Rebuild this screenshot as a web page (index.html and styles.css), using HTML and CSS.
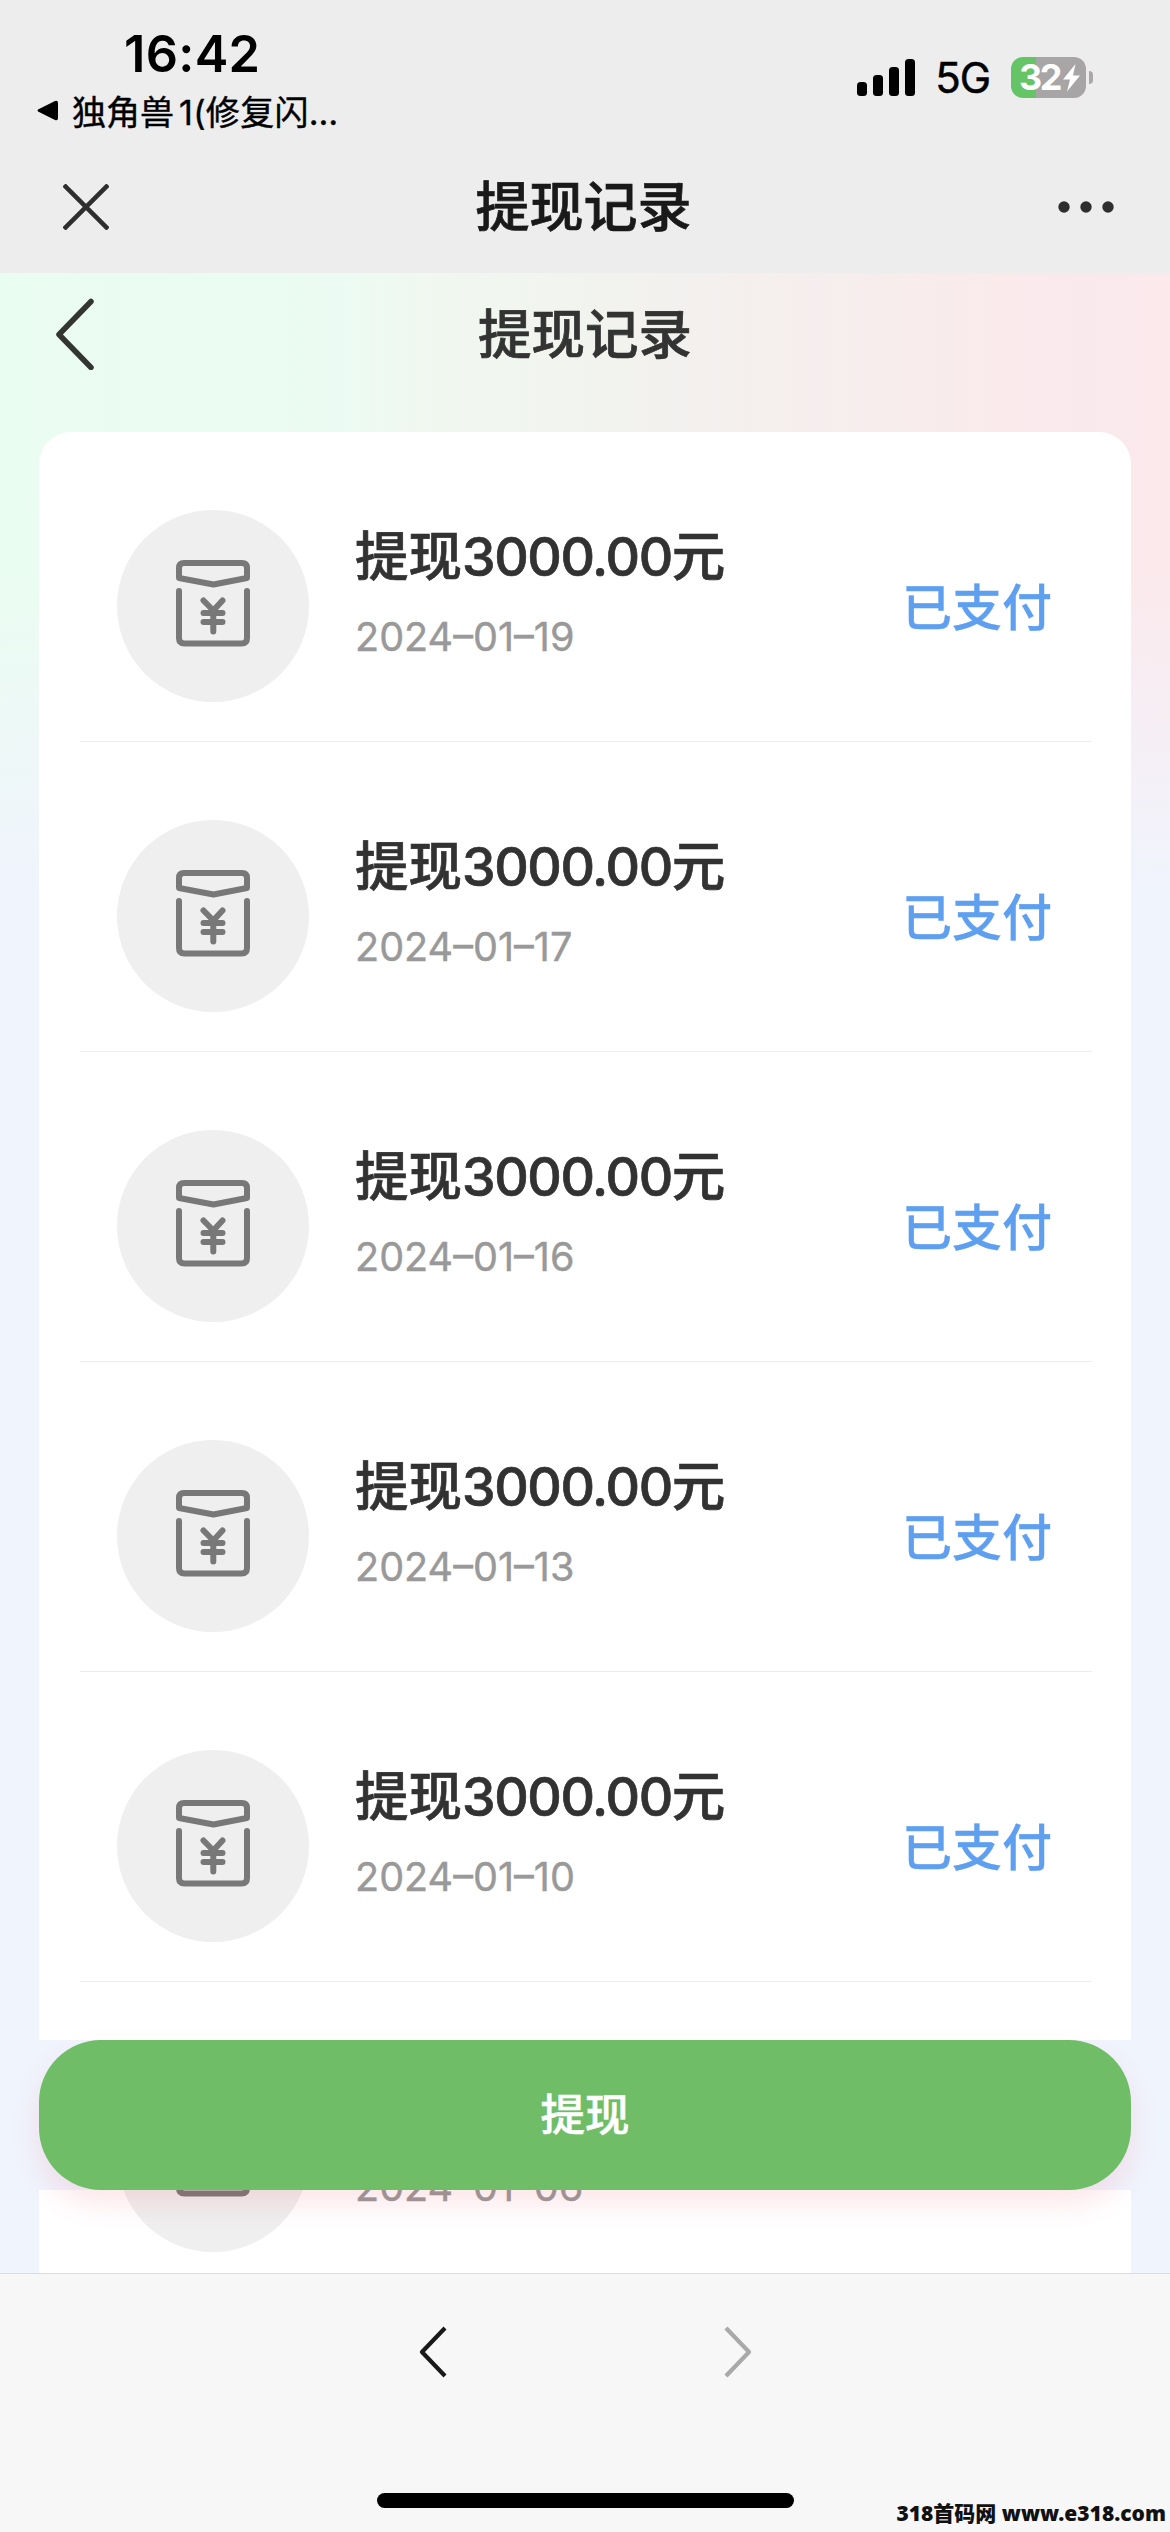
FILE: index.html
```html
<!DOCTYPE html>
<html lang="zh-CN">
<head>
<meta charset="utf-8">
<title>提现记录</title>
<link rel="stylesheet" href="styles.css">
</head>
<body>
<svg width="0" height="0" class="sprite" aria-hidden="true">
  <symbol id="packet" viewBox="0 0 74 87">
    <g fill="none" stroke="#787878" stroke-width="6" stroke-linecap="round" stroke-linejoin="round">
      <path d="M3 18V8Q3 3 8 3H66Q71 3 71 8V18L37.500 24.500Z"/>
      <path d="M3 31V78Q3 83.500 8.500 83.500H65.500Q71 83.500 71 78V31"/>
      <path d="M27.500 40.500L37.300 50.500L46.500 40.500M27.500 53H46.500M27.500 62H46.500M37.300 50.500V71.500"/>
    </g>
  </symbol>
</svg>
<div class="phone">
  <header class="top">
    <div class="status">
      <div class="status-left">
        <div class="time">16:42</div>
        <div class="return"><svg width="22" height="21" viewBox="0 0 22 21"><path d="M1 9.500Q0 10.500 1 11.500L18 20Q21 21 21 18V3Q21 0 18 1Z"/></svg><span>独角兽</span><span class="one">1(修复闪…</span></div>
      </div>
      <div class="status-right">
        <svg width="59" height="38" viewBox="0 0 59 38"><rect y="23" width="10" height="14" rx="3.500"/><rect x="16" y="16" width="10" height="21" rx="3.500"/><rect x="32" y="8" width="10" height="29" rx="3.500"/><rect x="48" width="10" height="37" rx="3.500"/></svg>
        <span class="net">5G</span>
        <div class="battery"><span>32</span><svg width="19" height="28" viewBox="0 0 19 28"><path d="M13.500 0L1 15.500H8L5 27.500L18 11.500H11Z" fill="#fff"/></svg></div>
        <i class="nub"></i>
      </div>
    </div>
    <div class="nav">
      <svg width="46" height="46" viewBox="0 0 46 46"><path d="M1 1L45 45M45 1L1 45" stroke="#2e2e2e" stroke-width="4.500"/></svg>
      <h1>提现记录</h1>
      <svg width="56" height="12" viewBox="0 0 56 12" fill="#2e2e2e"><circle cx="6" cy="6" r="5.700"/><circle cx="28" cy="6" r="5.700"/><circle cx="50" cy="6" r="5.700"/></svg>
    </div>
  </header>
  <main class="page">
    <div class="title-bar">
      <svg width="40" height="72" viewBox="0 0 40 72"><path d="M37 3.500L5 36.500L37 69.500" fill="none" stroke="#323532" stroke-width="5.500" stroke-linecap="round" stroke-linejoin="round"/></svg>
      <h2>提现记录</h2>
    </div>
    <section class="list">
      <article class="row"><div class="badge"><svg><use href="#packet"/></svg></div><div class="info"><b>提现<em>3000.00</em>元</b><time>2024–01–19</time></div><span class="state">已支付</span></article>
      <article class="row"><div class="badge"><svg><use href="#packet"/></svg></div><div class="info"><b>提现<em>3000.00</em>元</b><time>2024–01–17</time></div><span class="state">已支付</span></article>
      <article class="row"><div class="badge"><svg><use href="#packet"/></svg></div><div class="info"><b>提现<em>3000.00</em>元</b><time>2024–01–16</time></div><span class="state">已支付</span></article>
      <article class="row"><div class="badge"><svg><use href="#packet"/></svg></div><div class="info"><b>提现<em>3000.00</em>元</b><time>2024–01–13</time></div><span class="state">已支付</span></article>
      <article class="row"><div class="badge"><svg><use href="#packet"/></svg></div><div class="info"><b>提现<em>3000.00</em>元</b><time>2024–01–10</time></div><span class="state">已支付</span></article>
      <article class="row"><div class="badge"><svg><use href="#packet"/></svg></div><div class="info"><b></b><time>2024–01–06</time></div></article>
    </section>
    <div class="action"><button>提现</button></div>
  </main>
  <footer class="toolbar">
    <div class="history">
      <svg width="28" height="52" viewBox="0 0 28 52"><path d="M26 2L3 26L26 50" fill="none" stroke="#191919" stroke-width="4.200" stroke-linejoin="round"/></svg>
      <svg width="28" height="52" viewBox="0 0 28 52"><path d="M2 2L25 26L2 50" fill="none" stroke="#a9a9a9" stroke-width="4.200" stroke-linejoin="round"/></svg>
    </div>
    <div class="home"></div>
    <div class="mark">318首码网 www.e318.com</div>
  </footer>
</div>
</body>
</html>
```
FILE: styles.css
```css
* { box-sizing: border-box; margin: 0; }
body { font-family: Inter, "Noto Sans CJK SC", sans-serif; }
.sprite { position: absolute; }
svg { display: block; flex: none; }
.phone { width: 1170px; height: 2532px; display: flex; flex-direction: column; overflow: hidden; }

.top { height: 273px; flex: none; background: #ededed; }
.status { height: 140px; padding: 26px 77px 0 37px; display: flex; justify-content: space-between; }
.time { height: 56px; padding-left: 87px; line-height: 56px; font-size: 50.500px; font-weight: 600; letter-spacing: .3px; }
.return { height: 56px; display: flex; align-items: center; font-size: 34px; font-weight: 400; white-space: nowrap; -webkit-text-stroke: .4px; }
.return svg { margin-right: 13px; }
.one { margin-left: 5px; letter-spacing: .3px; }
.status-right { height: 41px; margin-top: 31px; display: flex; align-items: center; }
.net { margin: 0 21px 0 19px; font-size: 42px; letter-spacing: -1px; line-height: 41px; -webkit-text-stroke: .5px; }
.battery { width: 75px; height: 41px; padding-left: 8px; border-radius: 12px; display: flex; align-items: center; background: linear-gradient(90deg, #64c466 25px, #a7a5a6 25px); color: #fff; font-size: 36px; font-weight: 700; letter-spacing: -2.500px; line-height: 41px; }
.battery svg { margin-left: 2px; }
.nub { width: 4px; height: 13px; margin-left: 3px; border-radius: 0 5px 5px 0; background: #a9a7a8; }
.nav { height: 133px; padding: 0 56px 0 63px; display: grid; grid-template-columns: 1fr auto 1fr; align-items: center; }
.nav svg:last-child { justify-self: end; }
h1, h2 { font-size: 54px; font-weight: 500; line-height: 72px; color: #191919; -webkit-text-stroke: .7px; }
h1 { margin: 2px 5px 0 -5px; }

.page { height: 2000px; flex: none; position: relative; overflow: hidden;
  background: linear-gradient(180deg, rgba(240,244,253,0) 300px, #f0f4fd 620px), linear-gradient(90deg, #eafdf1 0, #ebfbf3 340px, #f0f8f0 420px, #f3f0ee 700px, #faeaec 1000px, #fbe9ec 100%); }
.title-bar { height: 159px; padding: 0 54px 37px; display: grid; grid-template-columns: 1fr auto 1fr; align-items: center; }
h2 { margin-top: 2px; color: #323332; font-size: 53.500px; }
.list { margin: 0 39px; padding: 0 39px 0 41px; height: 1841px; border-radius: 32px 32px 0 0; background: #fff; overflow: hidden; }
.row { height: 310px; padding: 0 40px 0 37px; display: flex; align-items: flex-start; border-bottom: 1px solid #ededed; }
.badge { width: 192px; height: 192px; margin-top: 78px; border-radius: 50%; display: flex; justify-content: center; background: #efefef; flex: none; }
.badge svg { width: 74px; height: 87px; margin-top: 50px; }
.info { margin: 89px 0 0 46px; display: flex; flex-direction: column; }
.info b { height: 72px; line-height: 72px; font-size: 53.500px; font-weight: 500; color: #323232; white-space: nowrap; -webkit-text-stroke: .7px; }
.info em { font-style: normal; letter-spacing: -1.400px; }
.info time { margin-top: 18px; height: 52px; line-height: 52px; font-size: 39.600px; color: #999; white-space: nowrap; -webkit-text-stroke: .4px; }
.state { margin: 140px 0 0 auto; line-height: 72px; font-size: 50px; font-weight: 500; color: #5f9ff0; -webkit-text-stroke: .3px; }
.action { position: absolute; left: 0; right: 0; top: 1767px; height: 150px; padding: 0 39px; background: #f0f4fd; }
.action button { width: 100%; height: 150px; padding: 0 0 7px; border: 0; border-radius: 62px; background: #70bd68; color: #fff; font: 500 44.500px Inter, "Noto Sans CJK SC", sans-serif; -webkit-text-stroke: .5px; box-shadow: 0 14px 28px rgba(230,70,90,.13); }

.toolbar { flex: 1; position: relative; border-top: 1px solid #dcdcdc; background: #f7f7f7; }
.history { padding: 52px 418px 0 419px; display: flex; justify-content: space-between; }
.home { width: 417px; height: 15px; margin: 115px 0 0 377px; border-radius: 8px; background: #000; }
.mark { position: absolute; right: 4px; bottom: 5px; line-height: 28px; font-family: "Noto Sans", "Noto Sans CJK SC", sans-serif; font-weight: 900; font-size: 21px; color: #111; white-space: nowrap; }
```
